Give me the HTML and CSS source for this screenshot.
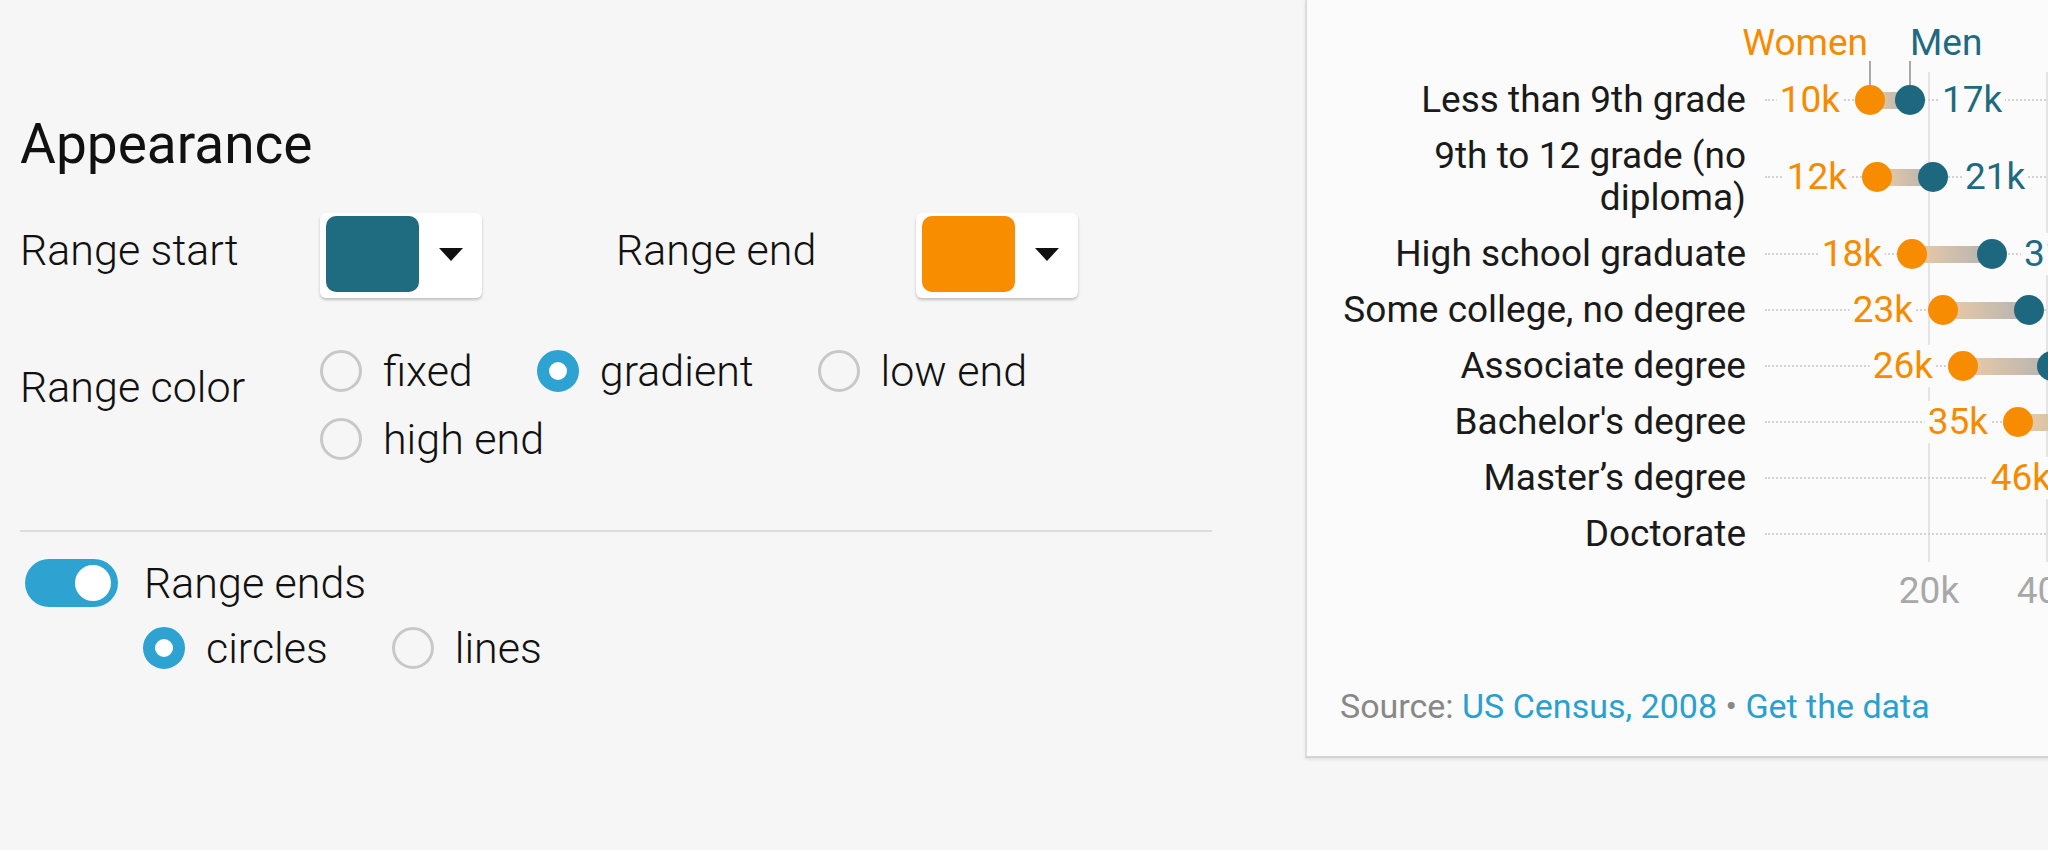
FILE: index.html
```html
<!DOCTYPE html>
<html lang="en">
<head>
<meta charset="utf-8">
<title>Appearance</title>
<link rel="stylesheet" href="styles.css">
</head>
<body>
<div class="page">
  <section class="panel">
    <h2 class="title">Appearance</h2>
    <div class="colors">
      <div class="color-group">
        <span class="label">Range start</span>
        <div class="picker"><span class="swatch teal"></span><span class="caret-wrap"><span class="caret"></span></span></div>
      </div>
      <div class="color-group">
        <span class="label">Range end</span>
        <div class="picker"><span class="swatch orange"></span><span class="caret-wrap"><span class="caret"></span></span></div>
      </div>
    </div>
    <div class="field">
      <span class="label">Range color</span>
      <div class="radios">
        <label class="opt"><span class="radio"></span>fixed</label>
        <label class="opt"><span class="radio on"></span>gradient</label>
        <label class="opt"><span class="radio"></span>low end</label>
        <label class="opt"><span class="radio"></span>high end</label>
      </div>
    </div>
    <hr class="divider">
    <div class="switch-row">
      <span class="toggle"><span class="knob"></span></span>
      <span class="switch-label">Range ends</span>
    </div>
    <div class="radios sub">
      <label class="opt"><span class="radio on"></span>circles</label>
      <label class="opt"><span class="radio"></span>lines</label>
    </div>
  </section>

  <section class="chart">
    <div class="legend">
      <div></div>
      <div class="legend-plot">
        <span class="lg w" style="left:105px">Women</span>
        <span class="lg m" style="left:145px">Men</span>
      </div>
    </div>
    <div class="rows">
      <span class="grid" style="left:589px"></span>
      <span class="grid" style="left:707px"></span>
      <div class="row">
        <div class="rlabel">Less than 9th grade</div>
        <div class="plot">
          <span class="rule"></span>
          <span class="bar" style="left:105px;width:40px"></span>
          <span class="pt w lead" style="left:105px"></span>
          <span class="pt m lead" style="left:145px"></span>
          <span class="val w" style="left:105px">10k</span>
          <span class="val m" style="left:145px">17k</span>
        </div>
      </div>
      <div class="row">
        <div class="rlabel">9th to 12 grade (no diploma)</div>
        <div class="plot">
          <span class="rule"></span>
          <span class="bar" style="left:112px;width:56px"></span>
          <span class="pt w" style="left:112px"></span>
          <span class="pt m" style="left:168px"></span>
          <span class="val w" style="left:112px">12k</span>
          <span class="val m" style="left:168px">21k</span>
        </div>
      </div>
      <div class="row">
        <div class="rlabel">High school graduate</div>
        <div class="plot">
          <span class="rule"></span>
          <span class="bar" style="left:147px;width:80px"></span>
          <span class="pt w" style="left:147px"></span>
          <span class="pt m" style="left:227px"></span>
          <span class="val w" style="left:147px">18k</span>
          <span class="val m" style="left:227px">31k</span>
        </div>
      </div>
      <div class="row">
        <div class="rlabel">Some college, no degree</div>
        <div class="plot">
          <span class="rule"></span>
          <span class="bar" style="left:178px;width:86px"></span>
          <span class="pt w" style="left:178px"></span>
          <span class="pt m" style="left:264px"></span>
          <span class="val w" style="left:178px">23k</span>
        </div>
      </div>
      <div class="row">
        <div class="rlabel">Associate degree</div>
        <div class="plot">
          <span class="rule"></span>
          <span class="bar" style="left:198px;width:89px"></span>
          <span class="pt w" style="left:198px"></span>
          <span class="pt m" style="left:287px"></span>
          <span class="val w" style="left:198px">26k</span>
        </div>
      </div>
      <div class="row">
        <div class="rlabel">Bachelor's degree</div>
        <div class="plot">
          <span class="rule"></span>
          <span class="bar" style="left:253px;width:100px"></span>
          <span class="pt w" style="left:253px"></span>
          <span class="pt m" style="left:353px"></span>
          <span class="val w" style="left:253px">35k</span>
        </div>
      </div>
      <div class="row">
        <div class="rlabel">Master’s degree</div>
        <div class="plot">
          <span class="rule"></span>
          <span class="bar" style="left:316px;width:110px"></span>
          <span class="pt w" style="left:316px"></span>
          <span class="pt m" style="left:426px"></span>
          <span class="val w" style="left:316px">46k</span>
        </div>
      </div>
      <div class="row">
        <div class="rlabel">Doctorate</div>
        <div class="plot">
          <span class="rule"></span>
        </div>
      </div>
    </div>
    <div class="axis">
      <div></div>
      <div class="axis-plot">
        <span class="tick" style="left:164px">20k</span>
        <span class="tick" style="left:282px">40k</span>
      </div>
    </div>
    <p class="source">Source: <a href="#">US Census, 2008</a> • <a href="#">Get the data</a></p>
  </section>
</div>
</body>
</html>
```

FILE: styles.css
```css
html, body {
  margin: 0;
  padding: 0;
}

body {
  width: 2048px;
  height: 850px;
  overflow: hidden;
  background: #f6f6f6;
  font-family: Roboto, "Liberation Sans", sans-serif;
  color: #111;
}

.page {
  display: flex;
  align-items: flex-start;
  height: 850px;
  overflow: hidden;
}

/* ---------- left settings panel ---------- */
.panel {
  flex: none;
  width: 1192px;
  padding: 112px 0 0 20px;
}

.title {
  margin: 0;
  font-size: 55px;
  line-height: 64px;
  font-weight: 400;
}

.colors {
  display: flex;
  margin-top: 37px;
}

.color-group {
  display: flex;
  align-items: flex-start;
  width: 597px;
}

.label {
  flex: none;
  width: 300px;
  font-size: 43px;
  font-weight: 300;
  line-height: 68px;
}

.colors .label {
  padding-top: 3px;
}

.picker {
  display: flex;
  width: 162px;
  box-sizing: border-box;
  padding: 3px 0 6px 6px;
  background: #fff;
  border-radius: 6px;
  box-shadow: 0 2px 3px rgba(0, 0, 0, 0.22);
}

.swatch {
  width: 93px;
  height: 76px;
  border-radius: 10px;
}

.swatch.teal { background: #1f6b80; }
.swatch.orange { background: #f88d00; }

.caret-wrap {
  flex: 1;
  display: flex;
  align-items: center;
  justify-content: center;
}

.caret {
  width: 0;
  height: 0;
  border-left: 12px solid transparent;
  border-right: 12px solid transparent;
  border-top: 13px solid #111;
}

.field {
  display: flex;
  align-items: flex-start;
  margin-top: 39px;
}

.field .label {
  padding-top: 16px;
}

.radios {
  display: flex;
  flex-wrap: wrap;
  column-gap: 64px;
  width: 780px;
}

.opt {
  display: flex;
  align-items: center;
  gap: 21px;
  height: 68px;
  font-size: 43px;
  font-weight: 300;
  line-height: 68px;
}

.radio {
  flex: none;
  width: 42px;
  height: 42px;
  box-sizing: border-box;
  border-radius: 50%;
  border: 3px solid #c8c8c8;
}

.radio.on {
  border: 12.5px solid #2ea3d2;
  background: #fff;
}

.divider {
  margin: 57px 0 0;
  border: 0;
  height: 2px;
  width: 1192px;
  background: #dcdcdc;
}

.switch-row {
  display: flex;
  align-items: center;
  height: 68px;
  margin-top: 17px;
  padding-left: 5px;
}

.toggle {
  flex: none;
  display: flex;
  align-items: center;
  justify-content: flex-end;
  box-sizing: border-box;
  width: 93px;
  height: 48px;
  padding-right: 7px;
  border-radius: 24px;
  background: #2ea3d2;
}

.knob {
  width: 36px;
  height: 36px;
  border-radius: 50%;
  background: #fff;
}

.switch-label {
  margin-left: 26px;
  font-size: 43px;
  font-weight: 300;
  line-height: 68px;
}

.radios.sub {
  width: auto;
  padding-left: 123px;
  margin-top: -3px;
}

/* ---------- chart ---------- */
.chart {
  flex: none;
  margin-left: 93px;
  width: 900px;
  height: 758px;
  box-sizing: border-box;
  padding: 22px 0 0 33px;
  background: #fbfbfb;
  border-left: 2px solid #dcdcdc;
  border-bottom: 2px solid #d4d4d4;
  box-shadow: 0 2px 3px rgba(0, 0, 0, 0.08);
  color: #1a1a1a;
}

.legend,
.row,
.axis {
  display: grid;
  grid-template-columns: 406px 1fr;
  column-gap: 19px;
}

.legend {
  height: 50px;
}

.legend-plot,
.plot,
.axis-plot {
  position: relative;
}

.lg {
  position: absolute;
  top: 0;
  font-size: 37px;
  line-height: 42px;
  white-space: nowrap;
}

.lg.w {
  color: #f68b00;
  transform: translateX(-100%);
  margin-left: -2px;
}

.lg.m {
  color: #1f6a80;
}

.rows {
  position: relative;
}

.grid {
  position: absolute;
  top: 0;
  bottom: 0;
  width: 2px;
  margin-left: -1px;
  background: #e4e4e4;
}

.rlabel {
  text-align: right;
  font-size: 37px;
  line-height: 42px;
  padding: 7px 0;
}

.rule {
  position: absolute;
  left: 0;
  right: 0;
  top: 50%;
  margin-top: -1px;
  border-top: 2px dotted #d2d2d2;
}

.bar {
  position: absolute;
  top: 50%;
  height: 17px;
  margin-top: -8.5px;
  background: linear-gradient(90deg, #edcba4, #b3b3b3);
}

.pt {
  position: absolute;
  top: 50%;
  width: 30px;
  height: 30px;
  margin: -15px 0 0 -15px;
  border-radius: 50%;
}

.pt.w { background: #f78c00; }
.pt.m { background: #1d687e; }

.pt.lead::after {
  content: "";
  position: absolute;
  left: 50%;
  bottom: 100%;
  width: 2px;
  height: 24px;
  margin-left: -1px;
  background: #a8a8a8;
}

.val {
  position: absolute;
  top: 50%;
  margin-top: -21px;
  padding: 0 3px;
  font-size: 37px;
  line-height: 42px;
  white-space: nowrap;
  background: #fbfbfb;
}

.val.w {
  color: #f68b00;
  transform: translateX(-100%);
  margin-left: -27px;
}

.val.m {
  color: #1f6a80;
  margin-left: 29px;
}

.axis {
  margin-top: 8px;
  height: 42px;
}

.tick {
  position: absolute;
  top: 0;
  transform: translateX(-50%);
  font-size: 37px;
  line-height: 42px;
  color: #a8a8a8;
  white-space: nowrap;
}

.source {
  margin: 74px 0 0;
  font-size: 34px;
  line-height: 40px;
  color: #888;
}

.source a {
  color: #2aa0d0;
  text-decoration: none;
}
```
